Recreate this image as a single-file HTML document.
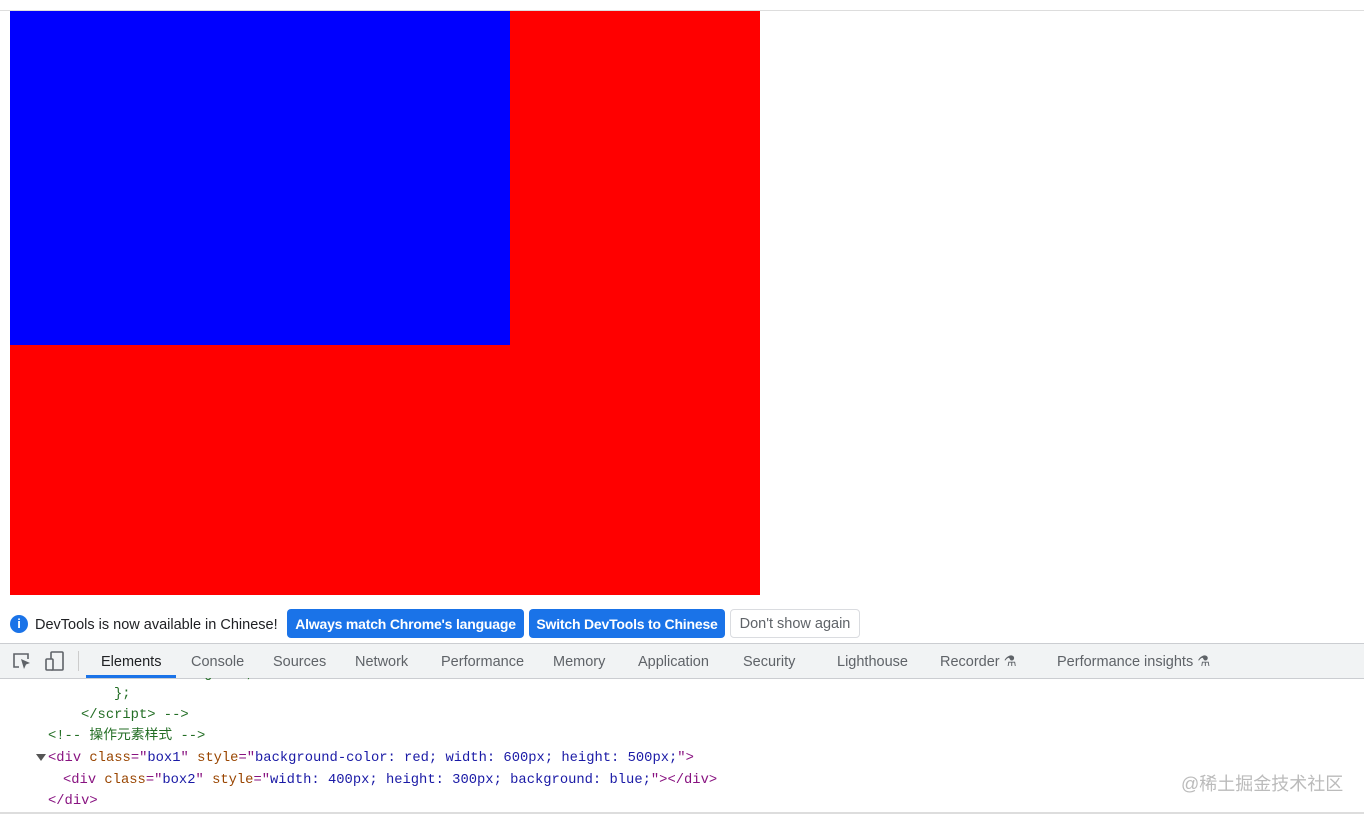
<!DOCTYPE html>
<html><head><meta charset="utf-8"><style>
body{margin:0;width:1364px;height:814px;position:relative;background:#fff;overflow:hidden;font-family:"Liberation Sans","Noto Sans CJK SC",sans-serif}
.a{position:absolute}
.btn{position:absolute;top:609px;height:29px;border-radius:4px;background:#1a73e8;color:#fff;font-size:14px;font-weight:bold;line-height:31px;text-align:center;box-sizing:border-box;letter-spacing:-0.2px}
.tab{position:absolute;top:654px;font-size:14.5px;color:#5f6368}
.code{position:absolute;font-family:"Liberation Mono","Noto Sans CJK SC",monospace;font-size:13.8px;white-space:pre;line-height:22px}
.t{color:#881280}.n{color:#994500}.v{color:#1a1aa6}.c{color:#236e25}
</style></head><body>
<div class="a" style="left:0;top:10px;width:1364px;height:1px;background:#ddd"></div>
<div class="a" style="left:10px;top:11px;width:750px;height:584px;background:#f00"></div>
<div class="a" style="left:10px;top:11px;width:500px;height:334px;background:#00f"></div>
<div class="a" style="left:10px;top:615px;width:18px;height:18px;border-radius:50%;background:#1a73e8;color:#fff;font-size:13px;font-weight:bold;text-align:center;line-height:18px">i</div>
<div class="a" style="left:35px;top:617px;font-size:14.5px;color:#202124">DevTools is now available in Chinese!</div>
<div class="btn" style="left:287px;width:237px">Always match Chrome's language</div>
<div class="btn" style="left:529px;width:196px">Switch DevTools to Chinese</div>
<div class="btn" style="left:730px;width:130px;background:#fff;color:#5f6368;border:1px solid #dadce0;font-weight:normal;font-size:14.5px;line-height:29px;letter-spacing:0">Don't show again</div>
<div class="a" style="left:0;top:643px;width:1364px;height:34px;background:#f1f3f4;border-top:1px solid #cbcdd1;border-bottom:1px solid #cbcdd1"></div>
<svg class="a" style="left:12px;top:651px" width="20" height="20" viewBox="0 0 20 20"><path d="M7 16H2V3h14v5" fill="none" stroke="#5f6368" stroke-width="1.6"/><path d="M9 8l9 4-4 1.5L12 18z" fill="#5f6368"/></svg>
<svg class="a" style="left:44px;top:650px" width="22" height="22" viewBox="0 0 22 22"><rect x="7" y="2" width="12" height="18" rx="1" fill="none" stroke="#5f6368" stroke-width="1.6"/><rect x="2" y="9" width="7" height="11" rx="1" fill="#f1f3f4" stroke="#5f6368" stroke-width="1.6"/></svg>
<div class="a" style="left:78px;top:651px;width:1px;height:20px;background:#ccc"></div>
<div class="tab" style="left:101px;color:#202124">Elements</div>
<div class="a" style="left:86px;top:675px;width:90px;height:3px;background:#1a73e8"></div>
<div class="tab" style="left:191px">Console</div>
<div class="tab" style="left:273px">Sources</div>
<div class="tab" style="left:355px">Network</div>
<div class="tab" style="left:441px">Performance</div>
<div class="tab" style="left:553px">Memory</div>
<div class="tab" style="left:638px">Application</div>
<div class="tab" style="left:743px">Security</div>
<div class="tab" style="left:837px">Lighthouse</div>
<div class="tab" style="left:940px">Recorder ⚗</div>
<div class="tab" style="left:1057px">Performance insights ⚗</div>
<div class="a" style="left:0;top:678px;width:1364px;height:134px;overflow:hidden">
<div class="code c" style="left:146px;top:-14px">color: green;</div>
<div class="code c" style="left:114px;top:6px">};</div>
<div class="code c" style="left:81px;top:27px">&lt;/script&gt; --&gt;</div>
<div class="code c" style="left:48px;top:48px">&lt;!-- 操作元素样式 --&gt;</div>
<div class="a" style="left:36px;top:76px;width:0;height:0;border-left:5px solid transparent;border-right:5px solid transparent;border-top:7px solid #555"></div>
<div class="code" style="left:48px;top:70px"><span class="t">&lt;div</span> <span class="n">class</span><span class="t">="</span><span class="v">box1</span><span class="t">"</span> <span class="n">style</span><span class="t">="</span><span class="v">background-color: red; width: 600px; height: 500px;</span><span class="t">"&gt;</span></div>
<div class="code" style="left:63px;top:92px"><span class="t">&lt;div</span> <span class="n">class</span><span class="t">="</span><span class="v">box2</span><span class="t">"</span> <span class="n">style</span><span class="t">="</span><span class="v">width: 400px; height: 300px; background: blue;</span><span class="t">"&gt;&lt;/div&gt;</span></div>
<div class="code t" style="left:48px;top:113px">&lt;/div&gt;</div>
</div>
<div class="a" style="left:1181px;top:770px;font-size:18px;color:#bbb">@稀土掘金技术社区</div>
<div class="a" style="left:0;top:812px;width:1364px;height:2px;background:#ddd"></div>
</body></html>
